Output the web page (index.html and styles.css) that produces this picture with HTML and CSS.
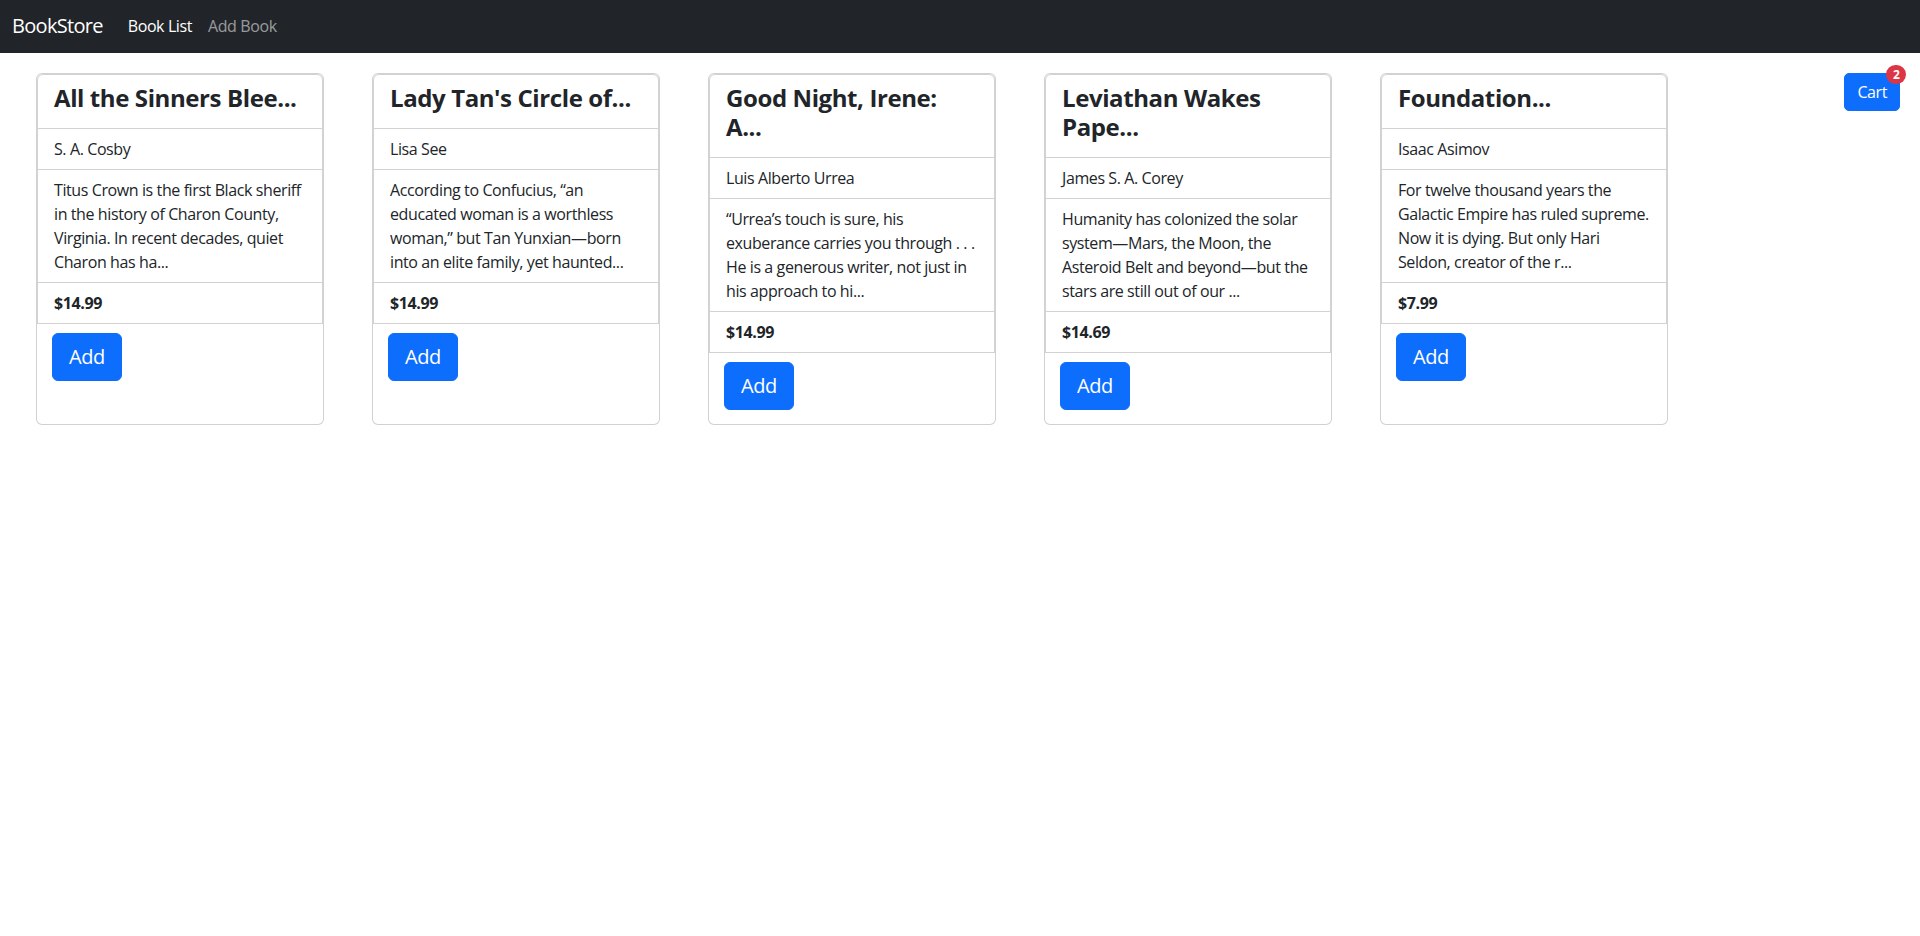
FILE: index.html
```html
<!DOCTYPE html>
<html lang="en">
<head>
<meta charset="utf-8">
<title>BookStore</title>
<link rel="stylesheet" href="styles.css">
</head>
<body>
<nav class="navbar">
  <a class="brand" href="#">BookStore</a>
  <a class="nav-link active" href="#">Book List</a>
  <a class="nav-link" href="#">Add Book</a>
</nav>
<main class="page">
  <div class="book-row">
    <div class="card">
      <ul class="list-group">
        <li class="item"><h4 class="title">All the Sinners Blee...</h4></li>
        <li class="item">S. A. Cosby</li>
        <li class="item">Titus Crown is the first Black sheriff in the history of Charon County, Virginia. In recent decades, quiet Charon has ha...</li>
        <li class="item price">$14.99</li>
      </ul>
      <div class="card-actions"><button class="btn-add">Add</button></div>
    </div>
    <div class="card">
      <ul class="list-group">
        <li class="item"><h4 class="title">Lady Tan's Circle of...</h4></li>
        <li class="item">Lisa See</li>
        <li class="item">According to Confucius, “an educated woman is a worthless woman,” but Tan Yunxian—born into an elite family, yet haunted...</li>
        <li class="item price">$14.99</li>
      </ul>
      <div class="card-actions"><button class="btn-add">Add</button></div>
    </div>
    <div class="card">
      <ul class="list-group">
        <li class="item"><h4 class="title">Good Night, Irene: A...</h4></li>
        <li class="item">Luis Alberto Urrea</li>
        <li class="item">“Urrea’s touch is sure, his exuberance carries you through . . . He is a generous writer, not just in his approach to hi...</li>
        <li class="item price">$14.99</li>
      </ul>
      <div class="card-actions"><button class="btn-add">Add</button></div>
    </div>
    <div class="card">
      <ul class="list-group">
        <li class="item"><h4 class="title">Leviathan Wakes Pape...</h4></li>
        <li class="item">James S. A. Corey</li>
        <li class="item">Humanity has colonized the solar system—Mars, the Moon, the Asteroid Belt and beyond—but the stars are still out of our ...</li>
        <li class="item price">$14.69</li>
      </ul>
      <div class="card-actions"><button class="btn-add">Add</button></div>
    </div>
    <div class="card">
      <ul class="list-group">
        <li class="item"><h4 class="title">Foundation...</h4></li>
        <li class="item">Isaac Asimov</li>
        <li class="item">For twelve thousand years the Galactic Empire has ruled supreme. Now it is dying. But only Hari Seldon, creator of the r...</li>
        <li class="item price">$7.99</li>
      </ul>
      <div class="card-actions"><button class="btn-add">Add</button></div>
    </div>
  </div>
  <div class="cart-wrap">
    <button class="btn-cart">Cart<span class="badge">2</span></button>
  </div>
</main>
</body>
</html>
```
FILE: styles.css
```css
* { box-sizing: border-box; }
html, body { margin: 0; padding: 0; }
body {
  font-family: "Open Sans", "Noto Sans", sans-serif;
  font-size: 16px;
  line-height: 1.5;
  color: #212529;
  background: #fff;
  letter-spacing: -0.025em;
}
.navbar {
  height: 53px;
  background: #212529;
  display: flex;
  align-items: center;
  padding: 0 12px 1px 12px;
}
.brand {
  color: #fff;
  font-size: 20px;
  line-height: 30px;
  letter-spacing: -0.035em;
  text-decoration: none;
  margin-right: 17px;
}
.nav-link {
  color: rgba(255, 255, 255, 0.55);
  text-decoration: none;
  padding: 0 8px;
  line-height: 24px;
}
.nav-link.active { color: #fff; }

.page {
  display: flex;
  justify-content: space-between;
  align-items: flex-start;
  padding: 20px 20px 0 12px;
}
.book-row {
  display: flex;
  align-items: stretch;
}
.card {
  width: 288px;
  margin: 0 24px;
  border: 1px solid rgba(0, 0, 0, 0.175);
  border-radius: 6px;
  background: #fff;
  display: flex;
  flex-direction: column;
}
.list-group {
  list-style: none;
  margin: 0;
  padding: 0;
}
.item {
  border: 1px solid rgba(0, 0, 0, 0.175);
  border-top-width: 0;
  padding: 8px 16px;
}
.item:first-child {
  border-top-width: 1px;
  border-radius: 6px 6px 0 0;
}
.title {
  margin: 0 0 7px 0;
  padding-top: 1px;
  font-size: 24px;
  line-height: 1.2;
  font-weight: 700;
}
.price { font-weight: 700; }
.card-actions {
  padding: 9px 15px 14px 15px;
}
.btn-add {
  font-family: inherit;
  letter-spacing: inherit;
  font-size: 20px;
  line-height: 30px;
  padding: 8px 16px;
  color: #fff;
  background: #0d6efd;
  border: 1px solid #0d6efd;
  border-radius: 6px;
  cursor: pointer;
}
.cart-wrap { padding-top: 0; }
.btn-cart {
  position: relative;
  font-family: inherit;
  letter-spacing: inherit;
  font-size: 16px;
  line-height: 24px;
  padding: 6px 12px;
  color: #fff;
  background: #0d6efd;
  border: 1px solid #0d6efd;
  border-radius: 5px;
  cursor: pointer;
}
.badge {
  position: absolute;
  left: 41px;
  top: -9px;
  min-width: 20px;
  height: 19px;
  padding: 0 5px;
  border-radius: 10px;
  background: #dc3545;
  color: #fff;
  font-size: 12px;
  font-weight: 700;
  line-height: 19px;
  letter-spacing: 0;
  text-align: center;
}
```
